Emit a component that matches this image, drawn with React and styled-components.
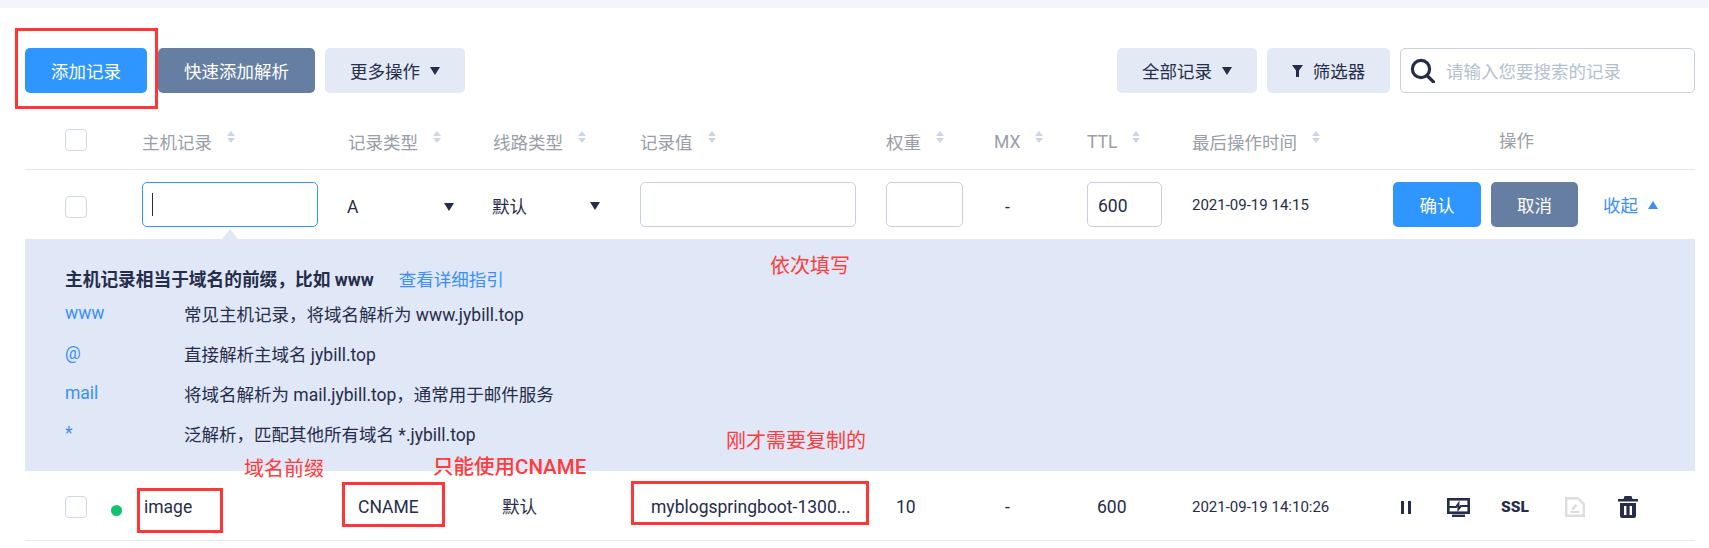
import React from 'react'
import styled, { createGlobalStyle } from 'styled-components'

const GlobalStyle = createGlobalStyle`
  body {
    margin: 0;
    background: #fff;
    color: #262d4a;
    font-family: Roboto, "Noto Sans CJK SC", sans-serif;
    font-size: 17.5px;
  }
`

const COLUMNS = '117px 206px 145px 147px 246px 108px 93px 105px 201px 1fr'

const Page = styled.div`
  position: relative;
  height: 548px;
  overflow: hidden;
  border-top: 8px solid #f2f5f9;
  box-sizing: border-box;
  padding: 40px 14px 0 25px;
`

const Toolbar = styled.div`
  display: flex;
  justify-content: space-between;
`

const ToolGroup = styled.div`
  display: flex;
  gap: 10px;
`

const Button = styled.div`
  display: flex;
  align-items: center;
  justify-content: center;
  gap: 10px;
  width: ${p => p.$w}px;
  height: 45px;
  margin-right: ${p => p.$after || 0}px;
  border-radius: 5px;
  background: ${p => (p.$kind === 'primary' ? '#3096ff' : p.$kind === 'slate' ? '#677ea3' : '#e4eaf5')};
  color: ${p => (p.$kind === 'primary' || p.$kind === 'slate' ? '#fff' : '#262d4a')};
`

const Caret = styled.span`
  display: inline-block;
  width: 0;
  height: 0;
  border-left: 5px solid transparent;
  border-right: 5px solid transparent;
  border-top: ${p => (p.$up ? '0' : `8px solid ${p.$color || '#262d4a'}`)};
  border-bottom: ${p => (p.$up ? `8px solid ${p.$color || '#262d4a'}` : '0')};
`

const SearchBox = styled.div`
  display: flex;
  align-items: center;
  gap: 11px;
  width: 295px;
  height: 45px;
  box-sizing: border-box;
  padding-left: 9px;
  border: 1px solid #c8d0e0;
  border-radius: 5px;
  color: #b5bfce;
`

const Row = styled.div`
  display: grid;
  grid-template-columns: ${COLUMNS};
  align-items: center;
  box-sizing: border-box;
  height: ${p => p.$h}px;
  border-bottom: 1px solid #e6e8ec;
`

const HeaderRow = styled(Row)`
  margin-top: 25px;
  padding-bottom: 8px;
  color: #999ea8;
`

const DataRow = styled(Row)`
  padding-top: 3px;
`

const CheckCell = styled.div`
  display: flex;
  align-items: center;
  padding-left: 40px;
  padding-top: ${p => p.$top || 0}px;
`

const Checkbox = styled.span`
  display: block;
  width: 22px;
  height: 22px;
  box-sizing: border-box;
  border: 1px solid #cfd6e4;
  border-radius: 4px;
`

const StatusDot = styled.span`
  width: 11px;
  height: 11px;
  margin: 6px 0 0 24px;
  border-radius: 50%;
  background: #12c36e;
`

const HeadCell = styled.div`
  display: flex;
  align-items: center;
  gap: 15px;
  padding-top: 4px;
`

const OperateHead = styled.div`
  padding-left: 106px;
`

const SortMark = styled.svg`
  width: 8px;
  height: 12px;
  margin-top: -9px;
`

const Cell = styled.div`
  position: relative;
  padding-left: ${p => p.$pad || 0}px;
  padding-top: ${p => p.$top || 0}px;
  margin-top: ${p => (p.$lift ? -p.$lift : 0)}px;
  font-size: ${p => p.$size || 17.5}px;
  white-space: nowrap;
`

const Field = styled.div`
  display: flex;
  align-items: center;
  width: ${p => p.$w}px;
  height: 45px;
  box-sizing: border-box;
  padding: ${p => (p.$focus ? '0 0 0 9px' : '2px 0 0 10px')};
  border: 1px solid ${p => (p.$focus ? '#3096ff' : '#c8d0e0')};
  border-radius: 5px;
`

const TextCursor = styled.span`
  width: 1px;
  height: 23px;
  background: #262d4a;
`

const PanelArrow = styled.span`
  position: absolute;
  left: 80px;
  top: 47px;
  width: 0;
  height: 0;
  border-left: 8px solid transparent;
  border-right: 8px solid transparent;
  border-bottom: 10px solid #e0e7f6;
`

const SelectBox = styled.div`
  display: flex;
  align-items: center;
  justify-content: space-between;
  width: ${p => p.$w}px;
  margin-left: -1px;
  padding-top: ${p => p.$top}px;
`

const Actions = styled.div`
  display: flex;
  align-items: center;
  gap: 10px;
`

const Collapse = styled.div`
  display: flex;
  align-items: center;
  gap: 10px;
  margin-left: 15px;
  color: #3a8fff;
`

const HelpPanel = styled.div`
  height: 231px;
  box-sizing: border-box;
  padding: 26px 0 0 40px;
  background: #e0e7f6;
`

const HelpTitle = styled.div`
  display: flex;
  align-items: center;
  gap: 25px;
  height: 24px;
  margin-bottom: 3px;
  font-size: 17.7px;
  font-weight: 700;
`

const GuideLink = styled.span`
  color: #3a8fff;
  font-size: 17.5px;
  font-weight: 400;
`

const HelpRow = styled.div`
  display: grid;
  grid-template-columns: 119px 1fr;
  align-items: center;
  height: 40px;
`

const HelpKey = styled.span`
  color: #3a8fff;
`

const IconSlot = styled.span`
  display: flex;
  align-items: center;
  margin-left: ${p => p.$gap}px;
`

const IconRow = styled.div`
  display: flex;
  align-items: center;
`

const SslMark = styled.span`
  font-size: 15.5px;
  font-weight: 900;
`

const MarkBox = styled.div`
  position: absolute;
  left: ${p => p.$x}px;
  top: ${p => p.$y}px;
  width: ${p => p.$w}px;
  height: ${p => p.$h}px;
  box-sizing: border-box;
  border: 3px solid #ff3636;
`

const MarkText = styled.div`
  position: absolute;
  left: ${p => p.$x}px;
  top: ${p => p.$y}px;
  color: #ff3b3b;
  font-size: ${p => p.$size || 20}px;
  line-height: 28px;
  font-weight: ${p => p.$weight || 400};
  white-space: nowrap;
`

const helpRows = [
  ['www', '常见主机记录，将域名解析为 www.jybill.top'],
  ['@', '直接解析主域名 jybill.top'],
  ['mail', '将域名解析为 mail.jybill.top，通常用于邮件服务'],
  ['*', '泛解析，匹配其他所有域名 *.jybill.top'],
]

const headers = ['主机记录', '记录类型', '线路类型', '记录值', '权重', 'MX', 'TTL', '最后操作时间']

const SortIcon = () => (
  <SortMark viewBox="0 0 8 12">
    <path d="M4 0 8 5H0zM0 7h8l-4 5z" fill="#ccd6e8" />
  </SortMark>
)

const SearchIcon = () => (
  <svg width="25" height="25" viewBox="0 0 25 25" fill="none" stroke="#262d4a" strokeWidth="3.2">
    <circle cx="11" cy="11" r="8.6" />
    <path d="M17 17.5 23.5 24" strokeLinecap="round" />
  </svg>
)

const FunnelIcon = () => (
  <svg width="11" height="12" viewBox="0 0 11 12">
    <path d="M0 0h11L7 5.5V12H4V5.5z" fill="#262d4a" />
  </svg>
)

const PauseIcon = () => (
  <svg width="10" height="13" viewBox="0 0 10 13">
    <path d="M0 0h3v13H0zM7 0h3v13H7z" fill="#262d4a" />
  </svg>
)

const MonitorIcon = () => (
  <svg width="23" height="19" viewBox="0 0 23 19" fill="none" stroke="#262d4a">
    <rect x="1.3" y="1.3" width="20.4" height="13.4" strokeWidth="2.6" />
    <path d="M2 9h7l2.4-3.2v5.4L14 8h7" strokeWidth="2" />
    <path d="M5 17.8h13" strokeWidth="2.4" />
  </svg>
)

const EditDocIcon = () => (
  <svg width="20" height="20" viewBox="0 0 20 20" fill="none" stroke="#ddd">
    <path d="M1.2 1.2h11.6l6 6v11.6H1.2z" strokeWidth="2.4" />
    <path d="M5.5 15h9" strokeWidth="2" />
    <path d="M7 12.5 11.5 8" strokeWidth="2.6" />
  </svg>
)

const TrashIcon = () => (
  <svg width="20" height="22" viewBox="0 0 20 22">
    <path d="M6.5 0h7l1 3H20v2.4H0V3h5.5z" fill="#262d4a" />
    <path
      d="M2 7h16v13a2 2 0 0 1-2 2H4a2 2 0 0 1-2-2zm4 3v9h2.4v-9zm5.6 0v9H14v-9z"
      fill="#262d4a"
      fillRule="evenodd"
    />
  </svg>
)

const App = () => {
  return (
    <Page>
      <GlobalStyle />

      <Toolbar>
        <ToolGroup>
          <Button $kind="primary" $w={122} $after={1}>添加记录</Button>
          <Button $kind="slate" $w={157}>快速添加解析</Button>
          <Button $w={140}>更多操作<Caret /></Button>
        </ToolGroup>
        <ToolGroup>
          <Button $w={140}>全部记录<Caret /></Button>
          <Button $w={123}><FunnelIcon />筛选器</Button>
          <SearchBox><SearchIcon />请输入您要搜索的记录</SearchBox>
        </ToolGroup>
      </Toolbar>

      <HeaderRow $h={52}>
        <CheckCell><Checkbox /></CheckCell>
        {headers.map(label => (
          <HeadCell key={label}>{label}<SortIcon /></HeadCell>
        ))}
        <OperateHead>操作</OperateHead>
      </HeaderRow>

      <Row $h={70}>
        <CheckCell $top={4}><Checkbox /></CheckCell>
        <Cell>
          <Field $focus $w={176}><TextCursor /></Field>
          <PanelArrow />
        </Cell>
        <Cell><SelectBox $w={107} $top={4}>A<Caret /></SelectBox></Cell>
        <Cell><SelectBox $w={108} $top={2}>默认<Caret /></SelectBox></Cell>
        <Cell><Field $w={216} /></Cell>
        <Cell><Field $w={77} /></Cell>
        <Cell $pad={11} $top={4}>-</Cell>
        <Cell><Field $w={75}>600</Field></Cell>
        <Cell $size={15}>2021-09-19 14:15</Cell>
        <Actions>
          <Button $kind="primary" $w={88}>确认</Button>
          <Button $kind="slate" $w={87}>取消</Button>
          <Collapse>收起<Caret $up $color="#3a8fff" /></Collapse>
        </Actions>
      </Row>

      <HelpPanel>
        <HelpTitle>
          主机记录相当于域名的前缀，比如 www
          <GuideLink>查看详细指引</GuideLink>
        </HelpTitle>
        {helpRows.map(([key, text]) => (
          <HelpRow key={key}>
            <HelpKey>{key}</HelpKey>
            <span>{text}</span>
          </HelpRow>
        ))}
      </HelpPanel>

      <DataRow $h={70}>
        <CheckCell>
          <Checkbox />
          <StatusDot />
        </CheckCell>
        <Cell $pad={2}>image</Cell>
        <Cell $pad={10}>CNAME</Cell>
        <Cell $pad={9} $lift={4}>默认</Cell>
        <Cell $pad={11}>myblogspringboot-1300...</Cell>
        <Cell $pad={10}>10</Cell>
        <Cell $pad={11}>-</Cell>
        <Cell $pad={10}>600</Cell>
        <Cell $size={15}>2021-09-19 14:10:26</Cell>
        <IconRow>
          <IconSlot $gap={8}><PauseIcon /></IconSlot>
          <IconSlot $gap={36}><MonitorIcon /></IconSlot>
          <IconSlot $gap={31}><SslMark>SSL</SslMark></IconSlot>
          <IconSlot $gap={36}><EditDocIcon /></IconSlot>
          <IconSlot $gap={33}><TrashIcon /></IconSlot>
        </IconRow>
      </DataRow>

      <MarkBox $x={15} $y={20} $w={143} $h={81} />
      <MarkBox $x={137} $y={480} $w={86} $h={45} />
      <MarkBox $x={342} $y={474} $w={103} $h={45} />
      <MarkBox $x={631} $y={473} $w={238} $h={44} />
      <MarkText $x={770} $y={244}>依次填写</MarkText>
      <MarkText $x={726} $y={419}>刚才需要复制的</MarkText>
      <MarkText $x={244} $y={447}>域名前缀</MarkText>
      <MarkText $x={433} $y={445} $size={20.5} $weight={500}>只能使用CNAME</MarkText>
    </Page>
  )
}

export default App
